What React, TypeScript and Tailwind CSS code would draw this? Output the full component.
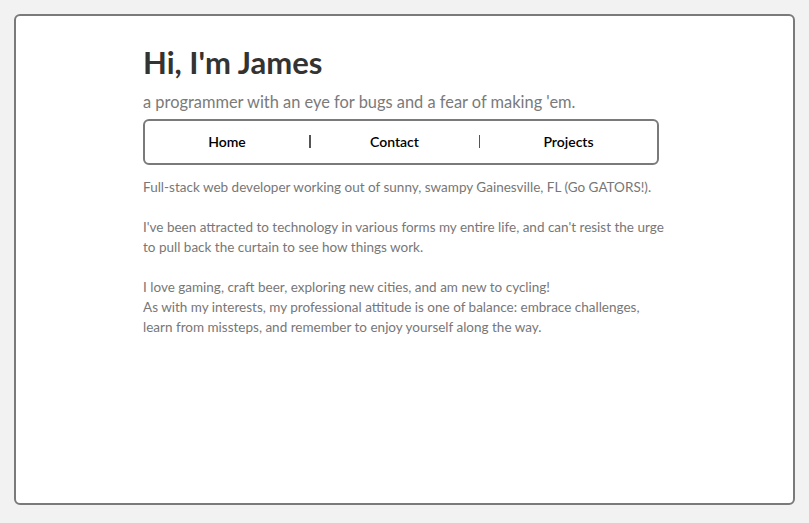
export default function App() {
  return (
    <div className="min-h-[523px] w-full bg-[#f2f2f2] p-[14px]" style={{ fontFamily: "Lato, 'Open Sans', sans-serif" }}>
      <div className="h-[491px] rounded-[6px] border-2 border-[#7a7a7a] bg-white">
        <div className="ml-[127px] w-[516px] pt-[26px]">
          <h1 className="text-[31px] font-bold leading-[40px] text-[#333333]">Hi, I'm James</h1>
          <p className="mt-[10px] text-[16.4px] leading-[20px] text-[#7a7a7a]">
            a programmer with an eye for bugs and a fear of making 'em.
          </p>
          <nav className="mt-[7px] flex h-[46px] items-center rounded-[6px] border-2 border-[#7a7a7a] pb-[2px] text-[14px] font-semibold text-black">
            <div className="flex w-[164px] justify-center">Home</div>
            <div className="h-[13px] w-[1.5px] bg-[#555555]" />
            <div className="flex w-[168px] justify-center">Contact</div>
            <div className="h-[13px] w-[1.5px] bg-[#555555]" />
            <div className="flex flex-1 justify-center">Projects</div>
          </nav>
          <div className="mt-[12px] w-[522px] text-[13.5px] leading-[20px] text-[#777777]">
            <p>Full-stack web developer working out of sunny, swampy Gainesville, FL (Go GATORS!).</p>
            <p className="mt-[20px]">
              I've been attracted to technology in various forms my entire life, and can't resist the urge to pull back the curtain to see how things work.
            </p>
            <p className="mt-[20px]">
              I love gaming, craft beer, exploring new cities, and am new to cycling!
              <br />
              As with my interests, my professional attitude is one of balance: embrace challenges, learn from missteps, and remember to enjoy yourself along the way.
            </p>
          </div>
        </div>
      </div>
    </div>
  );
}
